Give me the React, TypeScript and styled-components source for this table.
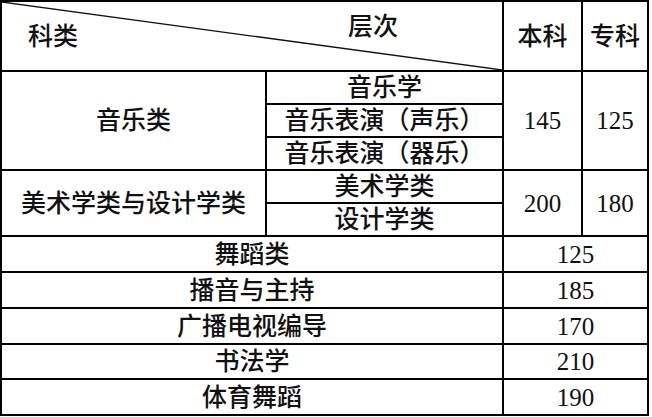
import React from 'react';
import styled, { createGlobalStyle } from 'styled-components';

type Row = {
  name: string;
  score: string;
};

const singleRows: Row[] = [
  { name: '舞蹈类', score: '125' },
  { name: '播音与主持', score: '185' },
  { name: '广播电视编导', score: '170' },
  { name: '书法学', score: '210' },
  { name: '体育舞蹈', score: '190' },
];

const App: React.FC = () => {
  return (
    <>
      <GlobalStyle />
      <Table>
        <Corner $col="1 / 3" $row="1">
          <Diagonal viewBox="0 0 100 100" preserveAspectRatio="none">
            <line
              x1="0"
              y1="0"
              x2="100"
              y2="100"
              stroke="#111"
              strokeWidth="1.3"
              vectorEffect="non-scaling-stroke"
            />
          </Diagonal>
          <CornerLabel $top={false}>科类</CornerLabel>
          <CornerLabel $top>层次</CornerLabel>
        </Corner>
        <Cell $col="3" $row="1">本科</Cell>
        <Cell $col="4" $row="1">专科</Cell>

        <Cell $col="1" $row="2 / 5">音乐类</Cell>
        <Cell $col="2" $row="2">音乐学</Cell>
        <Cell $col="2" $row="3">音乐表演（声乐）</Cell>
        <Cell $col="2" $row="4">音乐表演（器乐）</Cell>
        <Cell $col="3" $row="2 / 5">145</Cell>
        <Cell $col="4" $row="2 / 5">125</Cell>

        <Cell $col="1" $row="5 / 7">美术学类与设计学类</Cell>
        <Cell $col="2" $row="5">美术学类</Cell>
        <Cell $col="2" $row="6">设计学类</Cell>
        <Cell $col="3" $row="5 / 7">200</Cell>
        <Cell $col="4" $row="5 / 7">180</Cell>

        {singleRows.map((row, i) => (
          <React.Fragment key={row.name}>
            <Cell $col="1 / 3" $row={String(7 + i)}>
              {row.name}
            </Cell>
            <Cell $col="3 / 5" $row={String(7 + i)}>
              {row.score}
            </Cell>
          </React.Fragment>
        ))}
      </Table>
    </>
  );
};
export default App;

const GlobalStyle = createGlobalStyle`
  html, body {
    margin: 0;
    padding: 0;
    background: #fff;
  }
  body {
    font-family: "Liberation Serif", "Noto Sans CJK SC", serif;
    color: #111;
  }
`;

const Table = styled.div`
  display: grid;
  width: 649px;
  box-sizing: border-box;
  grid-template-columns: 263px 235px 77px 64px;
  grid-template-rows: 68px 31px 31px 31px 31px 31px 34px 34px 34px 33px 34px;
  gap: 2px;
  padding: 2px;
  background: #000;
`;

const Cell = styled.div<{ $col: string; $row: string }>`
  grid-column: ${(p) => p.$col};
  grid-row: ${(p) => p.$row};
  background: #fff;
  display: flex;
  align-items: center;
  justify-content: center;
  font-size: 25px;
  font-weight: 500;
  line-height: 1;
  white-space: nowrap;
`;

const Corner = styled(Cell)`
  position: relative;
  justify-content: space-between;
  align-items: stretch;
  padding: 0 104px 0 26px;
`;

const Diagonal = styled.svg`
  position: absolute;
  inset: 0;
  width: 100%;
  height: 100%;
  pointer-events: none;
`;

const CornerLabel = styled.span<{ $top: boolean }>`
  align-self: ${(p) => (p.$top ? 'flex-start' : 'center')};
  margin-top: ${(p) => (p.$top ? '12px' : '0')};
`;
